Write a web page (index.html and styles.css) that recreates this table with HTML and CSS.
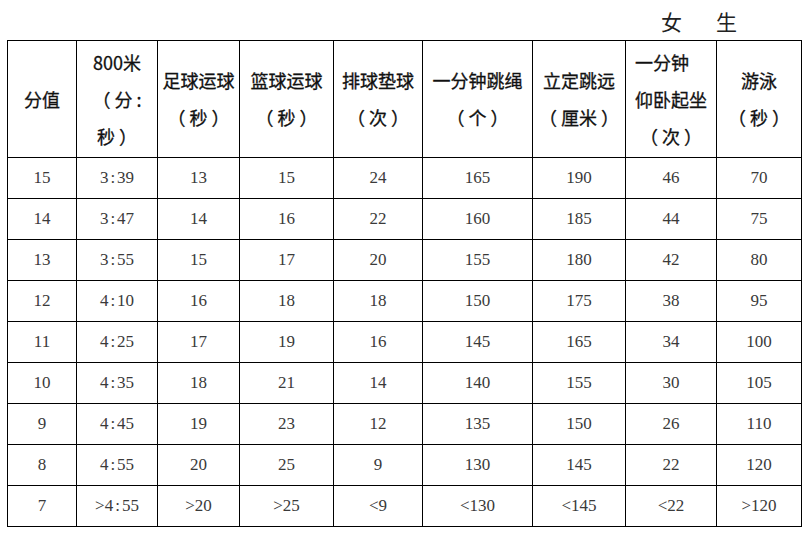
FILE: index.html
```html
<!DOCTYPE html>
<html lang="zh">
<head>
<meta charset="utf-8">
<title>女生</title>
<link rel="stylesheet" href="styles.css">
</head>
<body>
<div class="page">
  <div class="title"><span>女</span><span>生</span></div>
  <table class="grid">
    <colgroup>
      <col class="c1"><col class="c2"><col class="c3"><col class="c4"><col class="c5"><col class="c6"><col class="c7"><col class="c8"><col class="c9">
    </colgroup>
    <thead>
      <tr>
        <th>分值</th>
        <th>800米<br><span class="unit">（分:</span><br><span class="unit">秒）</span></th>
        <th>足球运球<br><span class="unit">（秒）</span></th>
        <th>篮球运球<br><span class="unit">（秒）</span></th>
        <th>排球垫球<br><span class="unit">（次）</span></th>
        <th>一分钟跳绳<br><span class="unit">（个）</span></th>
        <th>立定跳远<br><span class="open">（</span>厘<span class="unit">米）</span></th>
        <th><span class="stack"><span class="left">一分钟</span><br>仰卧起坐<br><span class="mid"><span class="unit">（次）</span></span></span></th>
        <th>游泳<br><span class="unit">（秒）</span></th>
      </tr>
    </thead>
    <tbody>
      <tr><td>15</td><td>3<span class="colon">:</span>39</td><td>13</td><td>15</td><td>24</td><td>165</td><td>190</td><td>46</td><td>70</td></tr>
      <tr><td>14</td><td>3<span class="colon">:</span>47</td><td>14</td><td>16</td><td>22</td><td>160</td><td>185</td><td>44</td><td>75</td></tr>
      <tr><td>13</td><td>3<span class="colon">:</span>55</td><td>15</td><td>17</td><td>20</td><td>155</td><td>180</td><td>42</td><td>80</td></tr>
      <tr><td>12</td><td>4<span class="colon">:</span>10</td><td>16</td><td>18</td><td>18</td><td>150</td><td>175</td><td>38</td><td>95</td></tr>
      <tr><td>11</td><td>4<span class="colon">:</span>25</td><td>17</td><td>19</td><td>16</td><td>145</td><td>165</td><td>34</td><td>100</td></tr>
      <tr><td>10</td><td>4<span class="colon">:</span>35</td><td>18</td><td>21</td><td>14</td><td>140</td><td>155</td><td>30</td><td>105</td></tr>
      <tr><td>9</td><td>4<span class="colon">:</span>45</td><td>19</td><td>23</td><td>12</td><td>135</td><td>150</td><td>26</td><td>110</td></tr>
      <tr><td>8</td><td>4<span class="colon">:</span>55</td><td>20</td><td>25</td><td>9</td><td>130</td><td>145</td><td>22</td><td>120</td></tr>
      <tr><td>7</td><td>&gt;4<span class="colon">:</span>55</td><td>&gt;20</td><td>&gt;25</td><td>&lt;9</td><td>&lt;130</td><td>&lt;145</td><td>&lt;22</td><td>&gt;120</td></tr>
    </tbody>
  </table>
</div>
</body>
</html>
```
FILE: styles.css
```css
html, body {
  margin: 0;
  padding: 0;
  background: #ffffff;
}

.page {
  padding: 0 0 0 7px;
  width: 804px;
}

.title {
  height: 40px;
  display: flex;
  justify-content: flex-end;
  align-items: center;
  gap: 34px;
  padding-right: 74px;
  box-sizing: border-box;
  font-family: "Noto Sans CJK SC", sans-serif;
  font-size: 21px;
  color: #222;
  line-height: 1;
  padding-top: 3px;
}

.grid {
  border-collapse: collapse;
  table-layout: fixed;
  width: 794px;
}

.c1 { width: 69px; }
.c2 { width: 81px; }
.c3 { width: 82px; }
.c4 { width: 94px; }
.c5 { width: 89px; }
.c6 { width: 110px; }
.c7 { width: 93px; }
.c8 { width: 91px; }
.c9 { width: 85px; }

.grid th,
.grid td {
  border: 1px solid #000;
  padding: 0;
  text-align: center;
  vertical-align: middle;
}

.grid th {
  height: 116px;
  font-family: "Noto Sans CJK SC", sans-serif;
  font-weight: normal;
  font-size: 18px;
  line-height: 37px;
  color: #111;
  white-space: nowrap;
  -webkit-text-stroke: 0.3px #111;
}

.unit {
  letter-spacing: 4px;
  margin-right: -4px;
}

.open {
  letter-spacing: 4px;
}

.stack {
  display: inline-block;
  text-align: left;
}

.stack .mid {
  display: inline-block;
  width: 100%;
  text-align: center;
}

.grid td {
  height: 40px;
  font-family: "Liberation Serif", serif;
  font-size: 17px;
  color: #3a3a3a;
  line-height: 20px;
}

.colon {
  padding: 0 2px;
}
```
